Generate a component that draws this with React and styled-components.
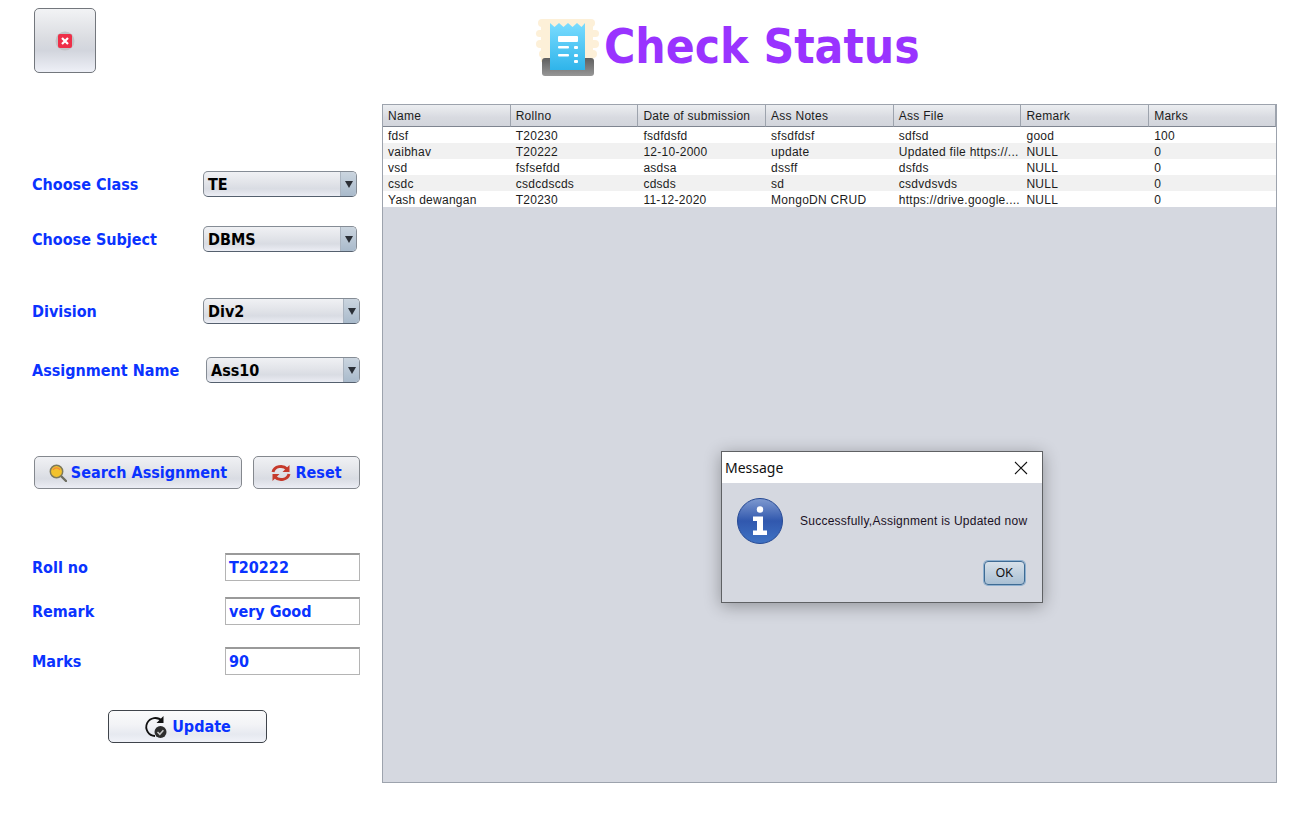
import React from "react";
import styled, { createGlobalStyle } from "styled-components";

const GlobalStyle = createGlobalStyle`
  html, body {
    margin: 0;
    padding: 0;
    background: #fff;
    overflow: hidden;
  }
`;

const BLUE = "#0a33ff";
const TAHOMA = `"DejaVu Sans", "Noto Sans", sans-serif`;
const chrome = "linear-gradient(to bottom, #f0f1f4 0%, #e2e4e9 45%, #d9dce3 70%, #e4e6ed 88%, #eceef5 100%)";
const lightChrome = "linear-gradient(to bottom, #fafafb 0%, #f2f3f6 45%, #e6e9f0 75%, #f0f2f8 100%)";

const Page = styled.div`
  position: relative;
  width: 1301px;
  height: 823px;
  background: #fff;
`;
const Header = styled.header`
  display: flex;
  align-items: flex-start;
  height: 104px;
`;
const CloseButton = styled.button`
  display: flex;
  align-items: center;
  justify-content: center;
  width: 62px;
  height: 65px;
  margin: 8px 0 0 34px;
  padding: 0;
  border: 1px solid #73777d;
  border-radius: 5px;
  background: linear-gradient(to bottom, #f2f3f5 0%, #d9dbe0 50%, #d2d5dd 66%, #eef0f7 100%);
`;
const TitleWrap = styled.div`
  display: flex;
  align-items: center;
  gap: 5px;
  margin: 14px 0 0 439px;
`;
const Title = styled.h1`
  margin: 0;
  font-family: ${TAHOMA};
  font-stretch: condensed;
  font-size: 47.5px;
  line-height: 66px;
  font-weight: 700;
  color: #9933ff;
  white-space: nowrap;
`;
const Body = styled.main`
  display: flex;
  align-items: flex-start;
`;
const Sidebar = styled.aside`
  width: 382px;
  flex: none;
  padding-left: 32px;
  box-sizing: border-box;
`;
const Row = styled.div`
  display: flex;
  align-items: center;
  justify-content: space-between;
  width: ${(p) => p.$width}px;
  margin-top: ${(p) => p.$top}px;
`;
const Label = styled.label`
  font-family: ${TAHOMA};
  font-stretch: condensed;
  font-size: 16px;
  font-weight: 700;
  color: ${BLUE};
  white-space: nowrap;
`;
const Combo = styled.div`
  display: flex;
  width: ${(p) => p.$width}px;
  height: 26px;
  box-sizing: border-box;
  border: 1px solid #858c95;
  border-bottom: 1px solid #55606e;
  border-radius: 5px;
  background: ${chrome};
  overflow: hidden;
`;
const ComboText = styled.span`
  flex: 1;
  padding-left: 4px;
  font-family: ${TAHOMA};
  font-stretch: condensed;
  font-size: 16px;
  line-height: 26px;
  font-weight: 700;
  color: #000;
`;
const ComboArrow = styled.span`
  display: flex;
  align-items: center;
  justify-content: center;
  width: 15px;
  background: linear-gradient(to bottom, #cbd5df, #a9bacb);
  border-left: 1px solid #aab4c0;
`;
const ArrowGlyph = styled.span`
  width: 0;
  height: 0;
  border-left: 4px solid transparent;
  border-right: 4px solid transparent;
  border-top: 7px solid #2b2f36;
`;
const Buttons = styled.div`
  display: flex;
  gap: 11px;
  margin: 73px 0 64px 2px;
`;
const ActionButton = styled.button`
  display: flex;
  align-items: center;
  justify-content: center;
  gap: ${(p) => p.$gap}px;
  width: ${(p) => p.$width}px;
  height: 33px;
  padding: 0;
  border: 1px solid ${(p) => (p.$light ? "#3f444b" : "#84888e")};
  border-radius: 5px;
  background: ${(p) => (p.$light ? lightChrome : chrome)};
  font-family: ${TAHOMA};
  font-stretch: condensed;
  font-size: 16px;
  font-weight: 700;
  color: ${BLUE};
`;
const UpdateWrap = styled.div`
  margin: 35px 0 0 76px;
`;
const Field = styled.div`
  width: 135px;
  height: 28px;
  box-sizing: border-box;
  padding-left: 3px;
  border: 1px solid #b4b4b4;
  border-top: 2px solid #9a9a9a;
  background: #fff;
  font-family: ${TAHOMA};
  font-stretch: condensed;
  font-size: 16px;
  line-height: 26px;
  font-weight: 700;
  color: ${BLUE};
`;
const Panel = styled.section`
  width: 895px;
  height: 679px;
  box-sizing: border-box;
  border: 1px solid #9da3ad;
  background: #d5d8e0;
`;
const Grid = styled.div`
  display: grid;
  grid-template-columns: repeat(6, 127.7px) 1fr;
  font-family: "Liberation Sans", Arial, sans-serif;
  font-size: 12px;
  letter-spacing: 0.27px;
  color: #1c1c1c;
`;
const HeadCell = styled.div`
  height: 22px;
  box-sizing: border-box;
  padding-left: 5px;
  line-height: 23px;
  background: linear-gradient(to bottom, #eceef1, #d8dae0 60%, #d2d5dc);
  border-right: 1px solid #9da3ad;
  border-bottom: 1px solid #7f8590;
`;
const Cell = styled.div`
  height: 16px;
  padding: 0 4px 0 5px;
  line-height: 18px;
  white-space: nowrap;
  overflow: hidden;
  background: ${(p) => (p.$odd ? "#f1f1f1" : "#fff")};
`;
const Dialog = styled.div`
  position: absolute;
  left: 721px;
  top: 451px;
  width: 322px;
  height: 152px;
  box-sizing: border-box;
  border: 1px solid #5f6164;
  background: #d5d8e0;
  box-shadow: 0 3px 16px rgba(0, 0, 0, 0.32);
  font-family: "Liberation Sans", Arial, sans-serif;
`;
const DialogBar = styled.div`
  display: flex;
  align-items: center;
  justify-content: space-between;
  height: 31px;
  padding: 0 14px 0 3px;
  background: #fff;
  font-family: "Noto Sans", sans-serif;
  font-size: 14px;
  color: #111;
`;
const DialogBody = styled.div`
  display: flex;
  align-items: center;
  gap: 17px;
  padding: 15px 0 0 15px;
  font-size: 12px;
  letter-spacing: 0.25px;
  color: #1a1024;
`;
const DialogFoot = styled.div`
  display: flex;
  justify-content: flex-end;
  padding: 17px 17px 0 0;
`;
const OkButton = styled.button`
  width: 41px;
  height: 24px;
  padding: 0;
  border: 1px solid #3e6b94;
  border-radius: 4px;
  box-shadow: 0 0 0 1px #8fb0cf;
  background: linear-gradient(to bottom, #d7e0e9, #a9bfd3);
  font-family: "Liberation Sans", Arial, sans-serif;
  font-size: 12px;
  color: #111;
`;

const columns = ["Name", "Rollno", "Date of submission", "Ass Notes", "Ass File", "Remark", "Marks"];
const rows = [
  ["fdsf", "T20230", "fsdfdsfd", "sfsdfdsf", "sdfsd", "good", "100"],
  ["vaibhav", "T20222", "12-10-2000", "update", "Updated file https://...", "NULL", "0"],
  ["vsd", "fsfsefdd", "asdsa", "dssff", "dsfds", "NULL", "0"],
  ["csdc", "csdcdscds", "cdsds", "sd", "csdvdsvds", "NULL", "0"],
  ["Yash dewangan", "T20230", "11-12-2020", "MongoDN CRUD", "https://drive.google....", "NULL", "0"],
];

const combos = [
  { label: "Choose Class", value: "TE", top: 67, rowWidth: 325, width: 154 },
  { label: "Choose Subject", value: "DBMS", top: 29, rowWidth: 325, width: 154 },
  { label: "Division", value: "Div2", top: 46, rowWidth: 328, width: 157 },
  { label: "Assignment Name", value: "Ass10", top: 33, rowWidth: 328, width: 154 },
];
const fields = [
  { label: "Roll no", value: "T20222", top: 0 },
  { label: "Remark", value: "very Good", top: 16 },
  { label: "Marks", value: "90", top: 22 },
];

const StopIcon = () => (
  <svg width="20" height="20" viewBox="0 0 20 20">
    <circle cx="10" cy="10" r="9.5" fill="#c2c3c6" />
    <rect x="3" y="3" width="14" height="14" rx="2" fill="#ee2f48" />
    <path d="M7 7l6 6M13 7l-6 6" stroke="#fff" strokeWidth="2.2" />
  </svg>
);

const ReceiptIcon = () => (
  <svg width="64" height="60" viewBox="0 0 64 60">
    <defs>
      <linearGradient id="paper" x1="0" y1="0" x2="0" y2="1">
        <stop offset="0" stopColor="#7adcff" />
        <stop offset="1" stopColor="#2fb4ea" />
      </linearGradient>
      <linearGradient id="tray" x1="0" y1="0" x2="0" y2="1">
        <stop offset="0" stopColor="#5f5f5f" />
        <stop offset="1" stopColor="#979797" />
      </linearGradient>
    </defs>
    <g fill="#fdf0d8">
      <rect x="3" y="2" width="57" height="8" rx="4" />
      <rect x="1" y="13" width="63" height="7" rx="3.5" />
      <rect x="6" y="9" width="52" height="36" />
      <rect x="1" y="23" width="63" height="8" rx="4" />
      <rect x="4" y="33" width="58" height="8" rx="4" />
    </g>
    <rect x="7" y="41" width="52" height="18" rx="3" fill="url(#tray)" />
    <path d="M15 6l4.5 4 4.5-4 4.5 4 4.5-4 4.5 4 4.5-4 4.5 4 3.5-4V53H15z" fill="url(#paper)" />
    <g fill="#fff">
      <rect x="23" y="19" width="20" height="6" rx="1" />
      <rect x="23" y="29" width="11" height="2.6" rx="1" />
      <rect x="23" y="37" width="11" height="2.6" rx="1" />
      <rect x="39" y="29" width="4" height="3" rx="1" />
      <rect x="39" y="37" width="4" height="3" rx="1" />
      <rect x="39" y="43" width="4" height="3" rx="1" />
    </g>
  </svg>
);

const SearchIcon = () => (
  <svg width="18" height="18" viewBox="0 0 18 18">
    <path d="M11 11l6 6" stroke="#6d6d60" strokeWidth="2.4" strokeLinecap="round" />
    <circle cx="7.5" cy="7.5" r="6.2" fill="#f2c22c" stroke="#7d7a5c" strokeWidth="1.5" />
    <path d="M4 6a4 4 0 0 1 7 0" stroke="#f08a3c" strokeWidth="1.2" fill="none" />
  </svg>
);

const ResetIcon = () => (
  <svg width="20" height="20" viewBox="0 0 20 20" fill="none">
    <path d="M2 9a8 7 0 0 1 14-3" stroke="#c63a2c" strokeWidth="3" />
    <path d="M18.5 2v7h-7z" fill="#c63a2c" />
    <path d="M18 11a8 7 0 0 1-14 3" stroke="#c63a2c" strokeWidth="3" />
    <path d="M1.5 18v-7h7z" fill="#c63a2c" />
  </svg>
);

const UpdateIcon = () => (
  <svg width="24" height="24" viewBox="0 0 24 24" fill="none">
    <path d="M11 21a9 9 0 1 1 7-15" stroke="#111" strokeWidth="1.8" />
    <path d="M19.5 1v7h-7z" fill="#111" />
    <circle cx="16.5" cy="17" r="6" fill="#2d2d2d" />
    <path d="M13.5 17l2.3 2.3 3.6-4" stroke="#c8c8c8" strokeWidth="1.5" />
  </svg>
);

const InfoIcon = () => (
  <svg width="46" height="46" viewBox="0 0 46 46">
    <defs>
      <linearGradient id="info" x1="0" y1="0" x2="0" y2="1">
        <stop offset="0" stopColor="#7f9ad0" />
        <stop offset="0.5" stopColor="#3158ae" />
        <stop offset="1" stopColor="#3f73c4" />
      </linearGradient>
    </defs>
    <circle cx="23" cy="23" r="22.5" fill="url(#info)" stroke="#274a94" />
    <circle cx="23" cy="11.5" r="3.2" fill="#fff" />
    <path d="M16 18.5h10v14h4v4.5H16v-4.5h4v-9.5h-4z" fill="#fff" />
  </svg>
);

const CloseGlyph = () => (
  <svg width="14" height="14" viewBox="0 0 14 14">
    <path d="M1 1l12 12M13 1L1 13" stroke="#111" strokeWidth="1.1" />
  </svg>
);

export default function App() {
  return (
    <Page>
      <GlobalStyle />
      <Header>
        <CloseButton>
          <StopIcon />
        </CloseButton>
        <TitleWrap>
          <ReceiptIcon />
          <Title>Check Status</Title>
        </TitleWrap>
      </Header>
      <Body>
        <Sidebar>
          {combos.map((c) => (
            <Row key={c.label} $top={c.top} $width={c.rowWidth}>
              <Label>{c.label}</Label>
              <Combo $width={c.width}>
                <ComboText>{c.value}</ComboText>
                <ComboArrow>
                  <ArrowGlyph />
                </ComboArrow>
              </Combo>
            </Row>
          ))}
          <Buttons>
            <ActionButton $width={208} $gap={4}>
              <SearchIcon />
              Search Assignment
            </ActionButton>
            <ActionButton $width={107} $gap={4}>
              <ResetIcon />
              Reset
            </ActionButton>
          </Buttons>
          {fields.map((f) => (
            <Row key={f.label} $top={f.top} $width={328}>
              <Label>{f.label}</Label>
              <Field>{f.value}</Field>
            </Row>
          ))}
          <UpdateWrap>
            <ActionButton $width={159} $gap={4} $light>
              <UpdateIcon />
              Update
            </ActionButton>
          </UpdateWrap>
        </Sidebar>
        <Panel>
          <Grid>
            {columns.map((c) => (
              <HeadCell key={c}>{c}</HeadCell>
            ))}
            {rows.map((row, i) =>
              row.map((v, j) => (
                <Cell key={`${i}-${j}`} $odd={i % 2 === 1}>
                  {v}
                </Cell>
              ))
            )}
          </Grid>
        </Panel>
      </Body>
      <Dialog>
        <DialogBar>
          Message
          <CloseGlyph />
        </DialogBar>
        <DialogBody>
          <InfoIcon />
          Successfully,Assignment is Updated now
        </DialogBody>
        <DialogFoot>
          <OkButton>OK</OkButton>
        </DialogFoot>
      </Dialog>
    </Page>
  );
}
